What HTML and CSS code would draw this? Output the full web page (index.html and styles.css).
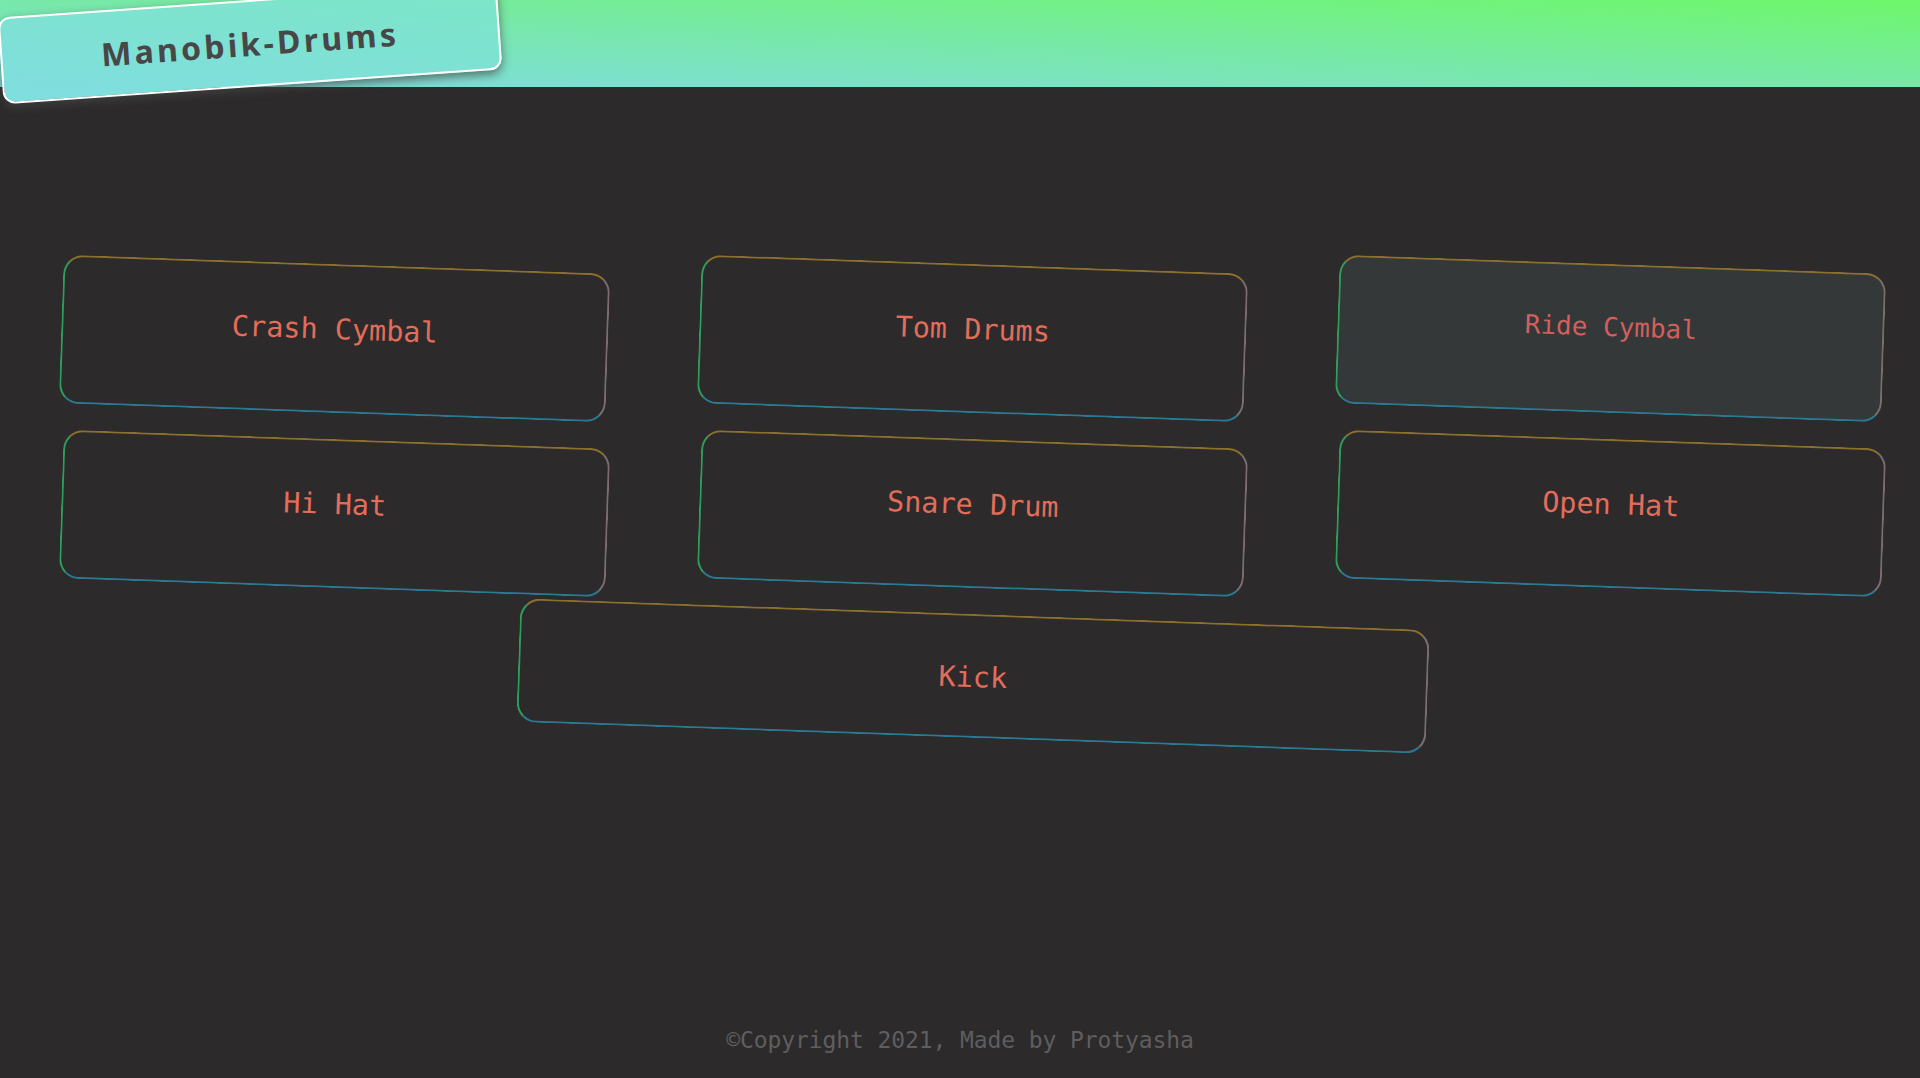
FILE: index.html
```html
<!DOCTYPE html>
<html lang="en">
<head>
<meta charset="utf-8">
<title>Manobik-Drums</title>
<link rel="stylesheet" href="styles.css">
</head>
<body>
<header class="topbar">
  <h1 class="logo">Manobik-Drums</h1>
</header>
<main class="pads">
  <button class="pad">Crash Cymbal</button>
  <button class="pad">Tom Drums</button>
  <button class="pad pad-active">Ride Cymbal</button>
  <button class="pad">Hi Hat</button>
  <button class="pad">Snare Drum</button>
  <button class="pad">Open Hat</button>
  <button class="pad pad-kick">Kick</button>
</main>
<footer class="footer">©Copyright 2021, Made by Protyasha</footer>
</body>
</html>
```
FILE: styles.css
```css
html, body {
  margin: 0;
  padding: 0;
}
body {
  background: #2c2a2b;
  height: 1078px;
  display: flex;
  flex-direction: column;
  overflow: hidden;
}
.topbar {
  height: 87px;
  flex: none;
  position: relative;
  background: linear-gradient(to top right, #7fdbe3 0%, #78e8aa 50%, #6ef76b 100%);
}
.logo {
  position: absolute;
  left: 0;
  top: 0;
  width: 500px;
  height: 87px;
  box-sizing: border-box;
  margin: 0;
  border: 2px solid #ffffff;
  border-radius: 12px;
  background: linear-gradient(to top right, #80dde0 0%, #7ce6c6 100%);
  box-shadow: 0 4px 10px rgba(70, 70, 70, 0.7);
  transform: rotate(-4deg);
  display: flex;
  align-items: center;
  justify-content: center;
  font-family: "Noto Sans", sans-serif;
  font-weight: 700;
  font-size: 32px;
  letter-spacing: 3.3px;
  color: #474747;
  z-index: 2;
}
.pads {
  display: grid;
  grid-template-columns: repeat(3, 547px);
  column-gap: 91px;
  row-gap: 26px;
  padding: 177px 0 0 61px;
}
.pad {
  height: 149px;
  box-sizing: border-box;
  background: transparent;
  border-style: solid;
  border-width: 2px;
  border-color: #8c702d #7b6f6d #2b7a93 #2f9d5b;
  border-radius: 20px;
  transform: rotate(2deg);
  font-family: "DejaVu Sans Mono", monospace;
  font-size: 28.5px;
  color: #e36d5a;
  padding: 0 0 18px 0;
  margin: 0;
}
.pad-active {
  background: #343838;
  color: #d35f5c;
  font-size: 26px;
  padding-bottom: 24px;
}
.pad-kick {
  grid-column: 1 / span 3;
  justify-self: center;
  width: 910px;
  height: 124px;
  padding: 2px 0 0 0;
}
.footer {
  margin-top: auto;
  text-align: center;
  font-family: "DejaVu Sans Mono", monospace;
  font-size: 23px;
  letter-spacing: -0.1px;
  line-height: 28px;
  color: #5f5e5e;
  padding-bottom: 24px;
}
```
